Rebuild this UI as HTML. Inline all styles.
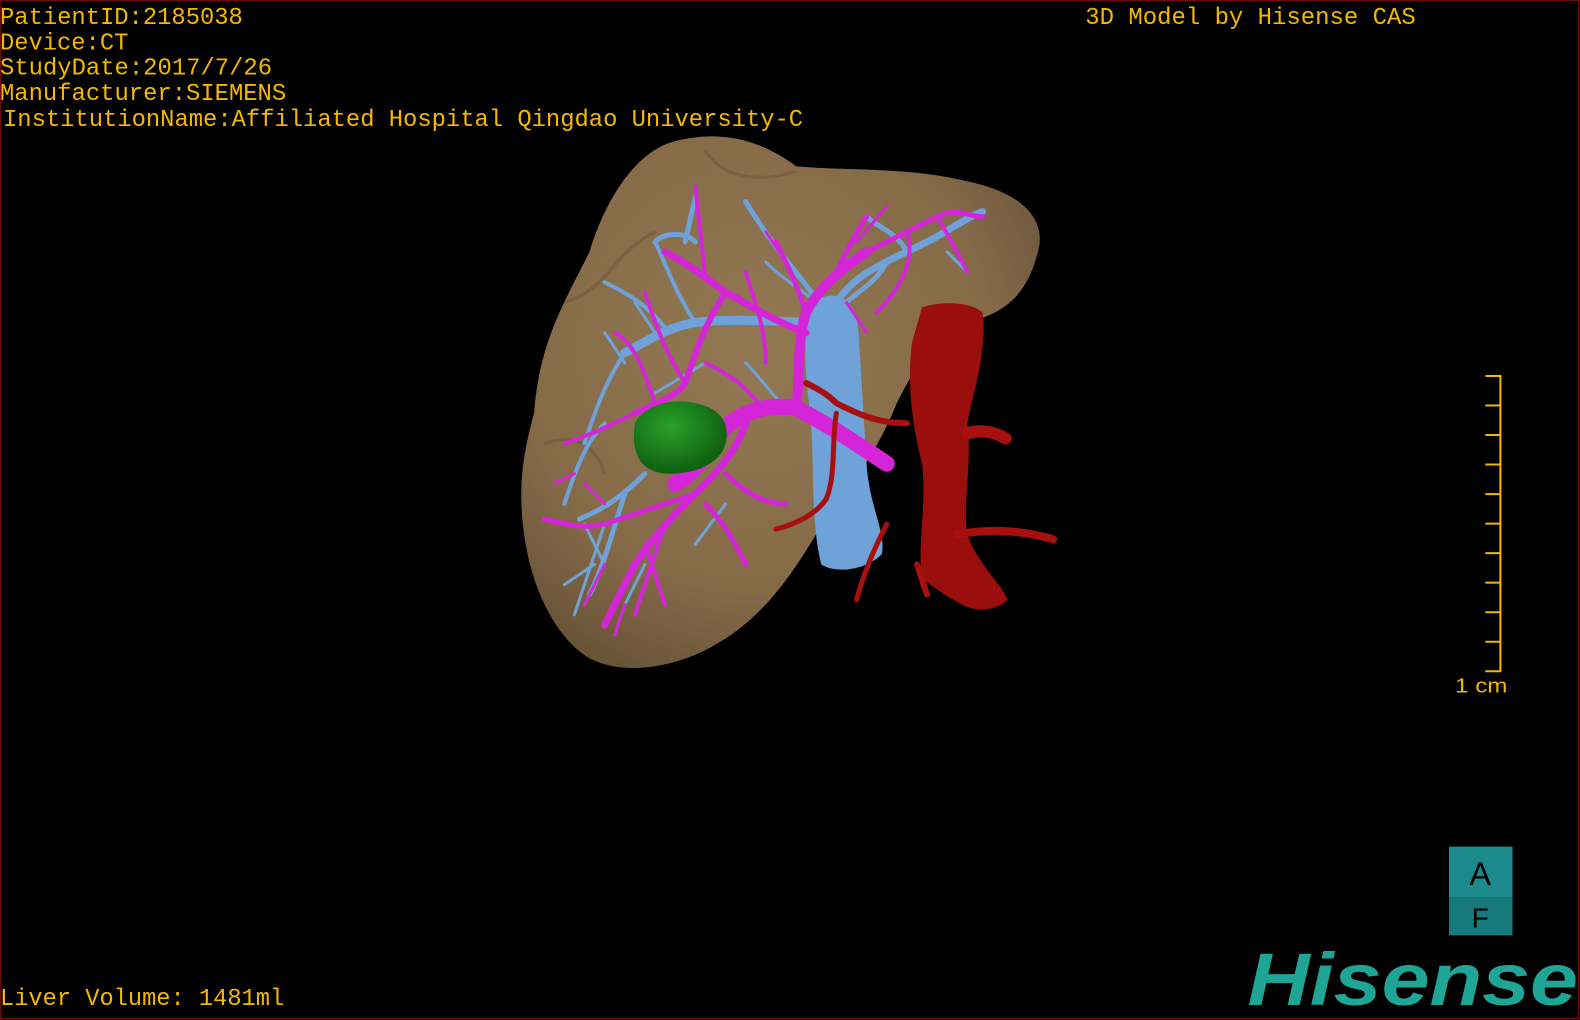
<!DOCTYPE html>
<html><head><meta charset="utf-8"><style>
html,body{margin:0;padding:0;background:#000;width:1580px;height:1020px;overflow:hidden}
svg{display:block}
</style></head><body>
<svg width="1580" height="1020" viewBox="0 0 1568 1012" preserveAspectRatio="none" xmlns="http://www.w3.org/2000/svg">
<rect x="0" y="0" width="1568" height="1012" fill="#000"/>
<rect x="0.5" y="0.5" width="1566" height="1010" fill="none" stroke="#6a0c0c" stroke-width="1.5"/>
<defs>
<radialGradient id="lv" cx="0.45" cy="0.4" r="0.65">
<stop offset="0" stop-color="#937853"/><stop offset="0.7" stop-color="#856a48"/><stop offset="1" stop-color="#6a5438"/>
</radialGradient>
<radialGradient id="gr" cx="0.4" cy="0.35" r="0.7"><stop offset="0" stop-color="#2aa02a"/><stop offset="1" stop-color="#0c5a0c"/></radialGradient>
</defs>
<!-- liver -->
<path d="M530 410 C535 340 560 300 585 250 C600 200 630 150 670 140 C710 130 750 135 790 165 C840 170 900 165 960 180 C1010 190 1040 215 1030 250 C1020 290 1000 310 960 320 C930 330 910 360 890 400 C870 450 840 490 810 530 C780 580 750 620 700 645 C660 665 610 670 580 650 C545 625 522 570 518 510 C515 470 522 440 530 410 Z" fill="url(#lv)"/>
<path d="M560 300 C600 290 610 250 650 230 M540 440 C570 430 590 440 600 470 M700 150 C720 180 760 180 790 170" stroke="#6a5439" stroke-width="3" fill="none" opacity="0.5"/>
<!-- IVC blue -->
<path d="M805 300 C830 285 850 295 852 330 L860 460 C862 500 880 530 875 550 C860 565 830 570 815 560 C805 520 808 470 805 420 C800 380 795 330 805 300 Z" fill="#6fa2d8"/>
<g stroke="#6fa2d8" fill="none" stroke-linecap="round">
<path d="M820 320 C780 320 730 315 690 320 C660 325 640 340 620 350" stroke-width="9"/>
<path d="M830 300 C850 270 880 260 920 240 C940 230 960 215 975 210" stroke-width="7"/>
<path d="M820 310 C800 280 770 250 740 200" stroke-width="5"/>
<path d="M690 320 C670 290 660 260 650 240 M660 325 C640 300 620 290 600 280" stroke-width="4"/>
<path d="M650 240 C660 230 680 230 690 240 M680 240 L690 195" stroke-width="5"/>
<path d="M620 350 C600 380 590 410 580 440 M600 420 C580 440 570 470 560 500" stroke-width="4"/>
<path d="M640 470 C620 490 600 505 575 515 M620 490 C610 520 600 560 585 590" stroke-width="5"/>
<path d="M600 520 C590 550 580 580 570 610 M560 580 L590 560" stroke-width="3"/>
<path d="M880 260 C870 280 850 290 840 300 M900 250 C890 230 870 225 860 215" stroke-width="5"/>
<path d="M760 260 C780 280 800 290 810 300 M740 360 C760 380 770 400 790 410" stroke-width="3"/>
<path d="M700 360 L650 390 M720 500 L690 540 M640 560 L620 600" stroke-width="3"/>
<path d="M600 330 L620 360 M630 300 L650 330 M580 520 L600 560 M940 250 L960 270" stroke-width="3"/>
</g>
<!-- portal magenta -->
<g stroke="#d426d8" fill="none" stroke-linecap="round">
<path d="M880 460 C850 440 820 420 790 405 C760 400 730 410 715 430 C700 450 690 470 670 480" stroke-width="16"/>
<path d="M790 405 C795 370 790 340 800 310 C810 290 830 270 860 250" stroke-width="10"/>
<path d="M800 330 C770 320 740 300 720 290 C700 275 680 260 660 250" stroke-width="7"/>
<path d="M720 290 C700 320 690 350 680 380 C670 395 650 400 630 410" stroke-width="6"/>
<path d="M860 250 C880 240 900 230 930 215 C950 205 960 215 975 215" stroke-width="5"/>
<path d="M800 310 C790 280 780 260 770 240 M830 270 C840 250 850 230 860 215" stroke-width="5"/>
<path d="M740 420 C730 450 710 470 690 490 C670 510 650 530 630 560 C620 580 610 600 600 620" stroke-width="7"/>
<path d="M690 490 C660 500 630 510 600 520 C580 525 560 520 540 515" stroke-width="5"/>
<path d="M720 470 C740 490 760 500 780 500 M700 500 C720 520 730 540 740 560" stroke-width="5"/>
<path d="M660 520 C650 550 640 580 630 610 M640 540 L660 600" stroke-width="4"/>
<path d="M630 410 C610 420 590 430 560 440 M650 400 C640 370 630 340 610 330" stroke-width="4"/>
<path d="M680 380 C660 350 650 320 640 290 M700 275 L690 185" stroke-width="4"/>
<path d="M760 360 C760 330 750 300 740 270 M760 410 C740 380 720 370 700 360" stroke-width="4"/>
<path d="M930 215 C945 240 955 260 960 270 M900 230 C910 260 890 290 870 310" stroke-width="4"/>
<path d="M620 600 L610 630 M600 560 L580 600 M570 470 L550 480" stroke-width="3"/>
<path d="M850 240 L880 205 M760 230 L780 260 M840 300 L860 330 M580 480 L600 500" stroke-width="3"/>
</g>
<!-- green tumor -->
<path d="M630 420 C640 400 670 395 690 400 C715 405 725 420 720 440 C715 460 690 470 665 470 C640 470 625 455 630 420 Z" fill="url(#gr)"/>
<!-- aorta red -->
<path d="M915 305 C935 298 965 300 975 310 C980 350 965 390 960 420 C965 460 955 500 960 530 C970 560 995 580 1000 595 C990 605 970 608 955 600 C935 590 925 580 915 575 C910 540 920 500 915 460 C905 420 900 380 905 340 Z" fill="#9a0e0e"/>
<g stroke="#a81010" fill="none" stroke-linecap="round">
<path d="M960 430 C975 425 990 430 998 435" stroke-width="12"/>
<path d="M950 530 C980 525 1010 525 1045 535" stroke-width="8"/>
<path d="M900 420 C870 420 850 410 830 400 C820 390 810 385 800 380" stroke-width="6"/>
<path d="M830 410 C825 440 830 470 820 495 C810 510 790 520 770 525" stroke-width="5"/>
<path d="M880 520 C870 540 860 560 850 595" stroke-width="5"/>
<path d="M910 560 L920 590" stroke-width="6"/>
</g>
<!-- text -->
<g font-family="Liberation Mono, DejaVu Sans Mono, monospace" font-size="23.6" fill="#f5b800">
<text x="0" y="24" textLength="241" lengthAdjust="spacingAndGlyphs">PatientID:2185038</text>
<text x="0" y="49">Device:CT</text>
<text x="0" y="74" textLength="270" lengthAdjust="spacingAndGlyphs">StudyDate:2017/7/26</text>
<text x="0" y="99" textLength="284" lengthAdjust="spacingAndGlyphs">Manufacturer:SIEMENS</text>
<text x="3" y="125" textLength="794" lengthAdjust="spacingAndGlyphs">InstitutionName:Affiliated Hospital Qingdao University-C</text>
<text x="1077" y="24" textLength="328" lengthAdjust="spacingAndGlyphs">3D Model by Hisense CAS</text>
<text x="0" y="997" textLength="282" lengthAdjust="spacingAndGlyphs">Liver Volume: 1481ml</text>
</g>
<!-- ruler -->
<g stroke="#f5b800" stroke-width="2" fill="none">
<path d="M1489 373 V666"/>
<path d="M1474 373 H1490 M1474 402.3 H1489 M1474 431.6 H1489 M1474 460.9 H1489 M1474 490.2 H1489 M1474 519.5 H1489 M1474 548.8 H1489 M1474 578.1 H1489 M1474 607.4 H1489 M1474 636.7 H1489 M1474 666 H1490"/>
</g>
<text x="1444" y="687" font-family="Liberation Sans, sans-serif" font-size="20" fill="#f5b800" textLength="52" lengthAdjust="spacingAndGlyphs">1 cm</text>
<!-- AF box -->
<rect x="1438" y="840" width="63" height="50" fill="#1a8a8c"/>
<rect x="1438" y="890" width="63" height="38" fill="#167a7c"/>
<text x="1469" y="878" text-anchor="middle" font-family="Liberation Sans, sans-serif" font-size="32" fill="#000">A</text>
<text x="1469" y="920" text-anchor="middle" font-family="Liberation Sans, sans-serif" font-size="28" fill="#000">F</text>
<text x="1238" y="997" font-family="Liberation Sans, sans-serif" font-size="74" font-weight="bold" font-style="italic" fill="#1fa596" textLength="328" lengthAdjust="spacingAndGlyphs">Hisense</text>
</svg>
</body></html>
